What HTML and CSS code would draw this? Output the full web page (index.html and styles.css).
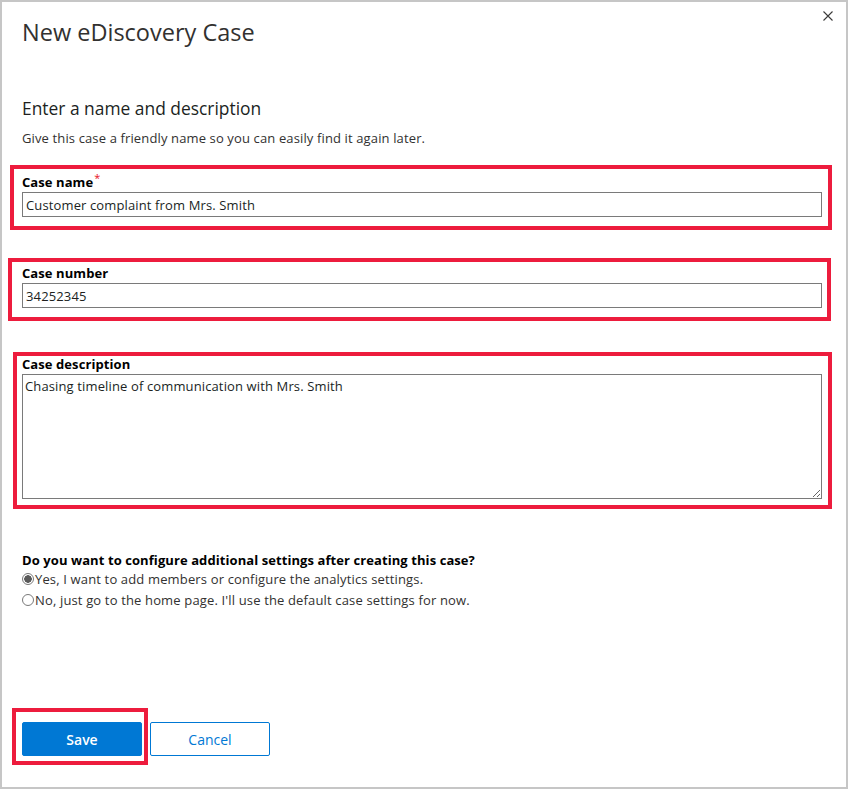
FILE: index.html
```html
<!DOCTYPE html>
<html lang="en">
<head>
<meta charset="utf-8">
<title>New eDiscovery Case</title>
<link rel="stylesheet" href="styles.css">
</head>
<body>
<div class="dialog">
  <div class="header">
    <h1 class="title">New eDiscovery Case</h1>
    <button class="close" type="button" aria-label="Close">
      <svg width="10" height="10" viewBox="0 0 10 10" aria-hidden="true"><path d="M0.5 0.5L9.5 9.5M9.5 0.5L0.5 9.5" stroke="#3b3a39" stroke-width="1.1" fill="none"/></svg>
    </button>
  </div>
  <h2 class="section-title">Enter a name and description</h2>
  <p class="section-desc">Give this case a friendly name so you can easily find it again later.</p>

  <div class="field field-name">
    <label class="field-label" for="case-name">Case name<span class="req">*</span></label>
    <input class="text-input" id="case-name" type="text" value="Customer complaint from Mrs. Smith">
  </div>

  <div class="field field-number">
    <label class="field-label" for="case-number">Case number</label>
    <input class="text-input" id="case-number" type="text" value="34252345">
  </div>

  <div class="field field-desc">
    <label class="field-label" for="case-desc">Case description</label>
    <textarea class="text-area" id="case-desc">Chasing timeline of communication with Mrs. Smith</textarea>
  </div>

  <div class="settings">
    <p class="settings-q">Do you want to configure additional settings after creating this case?</p>
    <label class="radio-row"><input class="radio" type="radio" name="next" checked>Yes, I want to add members or configure the analytics settings.</label>
    <label class="radio-row"><input class="radio" type="radio" name="next">No, just go to the home page. I'll use the default case settings for now.</label>
  </div>

  <div class="footer">
    <div class="save-box">
      <button class="btn btn-primary" type="button">Save</button>
    </div>
    <button class="btn btn-default" type="button">Cancel</button>
  </div>
</div>
</body>
</html>
```

FILE: styles.css
```css
* { box-sizing: border-box; }
html, body { margin: 0; padding: 0; background: #ffffff; }
body { font-family: "Open Sans", "Noto Sans", Arial, sans-serif; color: #201f1e; }

.dialog {
  width: 848px;
  height: 789px;
  border: 2px solid #c6c6c6;
  display: flex;
  flex-direction: column;
  padding-bottom: 22px;
}

.header {
  display: flex;
  justify-content: space-between;
  align-items: flex-start;
  padding: 0 13px 0 20px;
}
.title {
  margin: 16px 0 0 0;
  font-size: 23.5px;
  line-height: 28px;
  font-weight: 400;
  color: #323130;
}
.close {
  margin-top: 9px;
  width: 10px;
  height: 10px;
  padding: 0;
  border: 0;
  background: none;
  display: flex;
}

.section-title {
  margin: 51px 0 0 20px;
  font-size: 17.4px;
  line-height: 22px;
  font-weight: 400;
  color: #201f1e;
}
.section-desc {
  margin: 11px 0 0 20px;
  font-size: 13px;
  line-height: 16px;
  letter-spacing: 0.13px;
  color: #323130;
}

.field {
  border: 4px solid #ed1c3d;
  display: flex;
  flex-direction: column;
  align-items: flex-start;
}
.field-name { margin: 19px 0 0 8px; width: 822px; padding: 5px 0 9px 8px; }
.field-number { margin: 28px 0 0 6px; width: 823px; padding: 3px 0 9px 10px; }
.field-desc { margin: 31px 0 0 11px; width: 819px; padding: 0 0 6px 5px; }

.field-label {
  font-size: 13px;
  line-height: 16px;
  font-weight: 700;
  letter-spacing: 0.08px;
  color: #000000;
}
.req {
  color: #e81123;
  font-weight: 400;
  font-size: 11px;
  line-height: 0;
  vertical-align: 5px;
  margin-left: 1px;
}

.text-input, .text-area {
  margin-top: 2px;
  width: 800px;
  border: 1px solid #7a7a7a;
  border-radius: 0;
  font-family: inherit;
  font-size: 13px;
  letter-spacing: 0.13px;
  color: #201f1e;
  background: #ffffff;
  outline: none;
}
.text-input { height: 25px; padding: 0 3px; }
.text-area { height: 125px; padding: 2px 2px; resize: vertical; line-height: 18px; }

.settings { margin: 43px 0 0 20px; }
.settings-q {
  margin: 0;
  font-size: 13px;
  line-height: 16px;
  font-weight: 700;
  letter-spacing: 0.08px;
  color: #000000;
}
.radio-row {
  display: flex;
  align-items: center;
  height: 21px;
  font-size: 13px;
  letter-spacing: 0.15px;
  color: #323130;
}
.radio {
  appearance: none;
  -webkit-appearance: none;
  width: 12px;
  height: 12px;
  margin: 0 1px 0 0;
  border: 1px solid #7a7a7a;
  border-radius: 50%;
  background: #ffffff;
}
.radio:checked {
  background: radial-gradient(circle, #5a5a5a 0 3.5px, #ffffff 4px);
}

.footer {
  margin-top: auto;
  display: flex;
  align-items: flex-start;
}
.save-box {
  margin-left: 10px;
  border: 4px solid #ed1c3d;
  padding: 10px 2px 5px 6px;
}
.btn {
  width: 120px;
  height: 34px;
  border-radius: 2px;
  font-family: inherit;
  font-size: 14px;
  cursor: pointer;
}
.btn-primary {
  display: block;
  background: #0078d4;
  border: 1px solid #0078d4;
  color: #ffffff;
  font-weight: 600;
}
.btn-default {
  margin: 14px 0 0 2px;
  background: #ffffff;
  border: 1px solid #0078d4;
  color: #0078d4;
}
```
